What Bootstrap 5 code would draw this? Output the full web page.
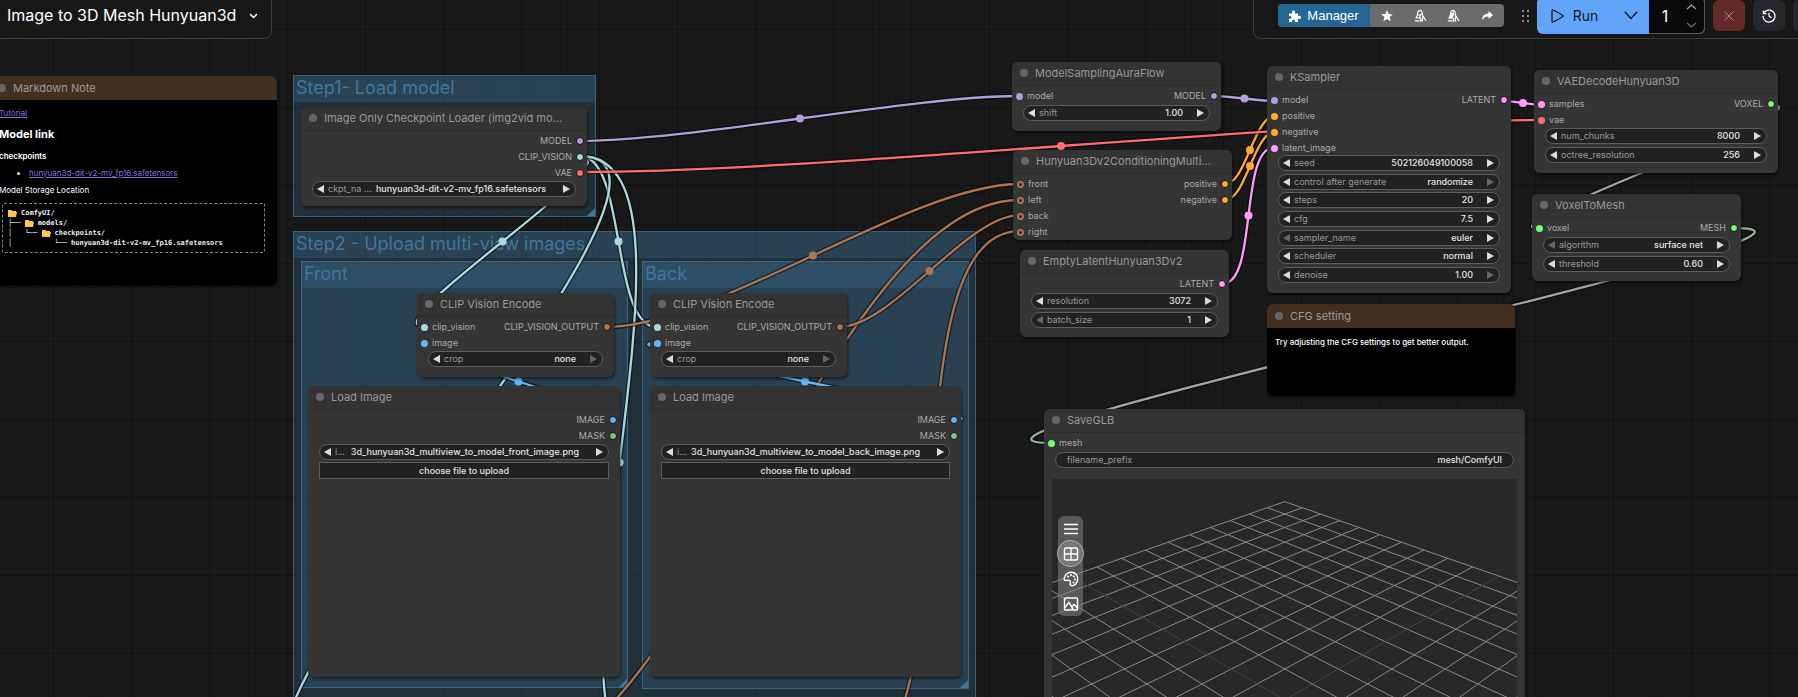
<!DOCTYPE html>
<html lang="en">
<head>
<meta charset="utf-8">
<meta name="viewport" content="width=device-width, initial-scale=1">
<title>Image to 3D Mesh Hunyuan3d</title>
<link href="https://cdn.jsdelivr.net/npm/bootstrap@5.3.0/dist/css/bootstrap.min.css" rel="stylesheet">
<style>
  body { background: #191919; color: #aaa; font-family: Inter, "Liberation Sans", sans-serif; font-size: 9px; line-height: 16px; }
  button, input, select { font: inherit; color: inherit; border: 0; padding: 0; background: transparent; }
  .graph-canvas { isolation: isolate; }
  .layer { position: absolute; inset: 0; width: 100%; height: 100%; pointer-events: none; }

  /* top panels */
  .top-panels { margin-top: -4px; z-index: 5; }
  .top-panel { height: 43px; background: #171717; border: 1px solid #3a3a3a; padding-bottom: 4px; }
  .title-panel { border-left: 0; border-radius: 0 0 8px 0; padding: 0 13px 4px 7px; gap: 13px; color: #fff; }
  .title-panel h1 { font-size: 16px; line-height: 20px; font-weight: 400; margin: 0 0 1px; }
  .action-panel { border-right: 0; border-radius: 0 0 0 8px; padding-left: 24px; }
  .manager-group { width: 226px; height: 23px; border-radius: 4px; overflow: hidden; background: #6b6b6b; color: #fff; }
  .manager-group button { flex: 1 1 0; display: flex; align-items: center; justify-content: center; }
  .manager-group .manager-btn { flex: 0 0 92px; gap: 6px; background: #236692; font: 400 13px/16px "Liberation Sans", sans-serif; }
  .drag-dots { margin: 0 8px 0 18px; color: #8a8a8a; }
  .run-group { height: 37px; border-radius: 6px; overflow: hidden; background: #60a5fa; color: #18181b; }
  .run-btn { width: 75px; gap: 9px; font-size: 14px; display: flex; align-items: center; justify-content: center; }
  .run-menu { width: 37px; display: flex; align-items: center; justify-content: center; }
  .batch-box { width: 56px; background: #09090b; border: 1px solid #52525b; border-left: 0; border-radius: 0 6px 6px 0; color: #fff; }
  .batch-box input { width: 32px; text-align: center; font-size: 16px; }
  .batch-box .arrows { width: 22px; color: #a1a1aa; }
  .square-btn { flex: none; width: 32px; height: 31px; border-radius: 6px; background: #27282b; color: #fff; margin-left: 8px; display: flex; align-items: center; justify-content: center; }
  .square-btn.stop-btn { background: #642a2a; color: #a98c8c; }
  .square-btn.cut-btn { width: 5px; border-radius: 6px 0 0 6px; }

  /* groups */
  .ngroup { position: absolute; background: rgba(63,120,158,.25); border: 1px solid rgba(63,120,158,.7); }
  .ngroup h2 { height: 26px; margin: 0; padding-left: 2px; background: rgba(63,120,158,.26); color: #3f789e; font-size: 18px; line-height: 23px; font-weight: 400; white-space: nowrap; }
  .ngroup::after { content: ""; position: absolute; right: 0; bottom: 0; border: 4px solid; border-color: transparent #3f789e #3f789e transparent; }
  #g1 { left: 293px; top: 75px; width: 303px; height: 142px; }
  #g2 { left: 293px; top: 231px; width: 683px; height: 910px; }
  #g3 { left: 301px; top: 261px; width: 327px; height: 427px; }
  #g4 { left: 642px; top: 261px; width: 327px; height: 428px; }

  /* nodes */
  .gnode { position: absolute; background: #353535; border-radius: 6px; box-shadow: 1px 2px 3px rgba(0,0,0,.5); }
  .gnode > header { height: 24px; padding: 0 0 1px 8px; gap: 7px; display: flex; align-items: center; background: #333; border-bottom: 1px solid #2c2c2c; border-radius: 6px 6px 0 0; }
  .gnode > header::before { content: ""; width: 8px; height: 8px; border-radius: 50%; background: #666; }
  .gnode h3 { margin: 0; font-size: 11px; line-height: 16px; font-weight: 400; color: #999; white-space: nowrap; }
  .slots { display: grid; grid-auto-rows: 1fr; padding: 0 3px 0 4px; margin-top: 2px; }
  .slots-1 { height: 16px; } .slots-2 { height: 31px; } .slots-3 { height: 47px; } .slots-4 { height: 62px; }
  .slot { display: flex; justify-content: space-between; align-items: center; line-height: 16px; }
  .slot span { display: flex; align-items: center; gap: 4px; }
  .slot i { width: 8px; height: 8px; border-radius: 50%; border: 1px solid #111; background: var(--c); }
  .slot i.in { border-width: 0; width: 7px; height: 7px; }
  .slot i.ring { background: #222; border: 2px solid var(--c); }
  .c-model { --c: #b39ddb; } .c-cv { --c: #a8dadc; } .c-vae { --c: #ff6e6e; } .c-cvo { --c: #ad7452; }
  .c-img { --c: #64b5f6; } .c-mask { --c: #81c784; } .c-cond { --c: #ffa931; } .c-lat { --c: #ff9cf9; } .c-any { --c: #77ff77; }
  .widgets { display: flex; flex-direction: column; justify-content: space-between; margin: 1px 11px 0; }
  .widgets-2 { height: 35px; } .widgets-7 { height: 128px; }
  .gwidget { height: 16px; display: flex; align-items: center; background: #222; border: 1px solid #5c5c5c; border-radius: 8px; padding: 0 5px 0 4px; color: #e2e2e2; }
  .gwidget label { color: #999; white-space: nowrap; margin-left: 4px; line-height: 14px; }
  .gwidget input, .gwidget select { flex: 1 1 0; min-width: 0; height: 14px; line-height: 14px; font-weight: 500; text-align: right; text-align-last: right; appearance: none; margin-right: 14px; outline: 0; }
  .gwidget .prev, .gwidget .next { flex: none; width: 0; height: 0; border: 4px solid transparent; }
  .gwidget .prev { border-right: 7px solid #ddd; border-left: 0; }
  .gwidget .next { border-left: 7px solid #ddd; border-right: 0; }
  .gwidget .prev:disabled { border-right-color: #666; }
  .gwidget .next:disabled { border-left-color: #666; }
  .gwidget.file-row select { margin-right: 17px; }
  .upload-btn { height: 17px; width: 100%; background: #222; border: 1px solid #5c5c5c; color: #e2e2e2; font-weight: 500; line-height: 15px; }
  .widgets-file { height: 35px; }

  .note-node { background: #000; }
  .note-node > header { background: #432f20; border-bottom: 0; }
  .note-body { color: #fff; font-size: 8px; line-height: 12px; font-weight: 500; }
  #note { left: -10px; top: 76px; width: 287px; height: 209px; }
  #note .note-body { padding: 7px 12px 0 9px; font-weight: 400; }
  #note a { color: #7b78d8; }
  #note p, #note h4, #note h5, #note ul { margin: 0; }
  #note h4 { font-size: 11px; line-height: 16px; font-weight: 700; margin-top: 7px; }
  #note h5 { font-size: 8px; line-height: 12px; font-weight: 600; margin-top: 8px; }
  #note ul { padding-left: 30px; margin-top: 5px; }
  #note .store { margin-top: 5px; }
  .tree { margin-top: 7px; margin-left: 3px; padding: 4px 5px; border: 1px dashed #888; border-radius: 2px; font: 700 7px/10px "DejaVu Sans Mono", monospace; color: #eee; }
  .tree div { height: 10px; display: flex; align-items: center; gap: 4px; white-space: pre; }
  .tree svg { width: 9px; height: 8px; }
  #cfg { left: 1267px; top: 304px; width: 248px; height: 92px; }
  #cfg .note-body { padding: 8px; }
  #loader { left: 301px; top: 107px; width: 286px; height: 99px; }
  #enc1 { left: 417px; top: 293px; width: 197px; height: 84px; }
  #enc2 { left: 650px; top: 293px; width: 197px; height: 84px; }
  #img1 { left: 308px; top: 386px; width: 312px; height: 291px; }
  #img2 { left: 650px; top: 386px; width: 311px; height: 291px; }
  #aura { left: 1012px; top: 62px; width: 209px; height: 69px; }
  #cond { left: 1013px; top: 150px; width: 219px; height: 90px; }
  #latent { left: 1020px; top: 250px; width: 209px; height: 87px; }
  #ksampler { left: 1267px; top: 66px; width: 244px; height: 227px; }
  #decode { left: 1534px; top: 70px; width: 244px; height: 103px; }
  #voxel { left: 1532px; top: 194px; width: 209px; height: 87px; }
  #glb { left: 1044px; top: 409px; width: 481px; height: 420px; }
  #glb .gwidget { padding: 0 11px 0 7px; }
  #glb .gwidget input { margin-right: 0; }
  .viewport3d { position: relative; margin: 11px 8px 0; height: 340px; background: #282828; overflow: hidden; }
  .view-tools { position: absolute; left: 6px; top: 37px; width: 25px; border-radius: 6px; background: rgba(130,130,130,.55); color: #fff; }
  .view-tools button { width: 25px; height: 25px; display: flex; align-items: center; justify-content: center; }
  .view-tools .active { outline: 1px solid #bbb; border-radius: 50%; background: rgba(150,150,150,.5); }
</style>
</head>
<body class="vh-100 overflow-hidden">
<main class="graph-canvas position-relative w-100 h-100 overflow-hidden">
  <svg class="layer" aria-hidden="true">
    <defs>
      <pattern id="gridTile" x="53" y="29" width="78" height="78" patternUnits="userSpaceOnUse">
        <path d="M8.3 0V78M16.1 0V78M23.9 0V78M31.7 0V78M39.5 0V78M47.3 0V78M55.1 0V78M62.9 0V78M70.7 0V78M0 8.3H78M0 16.1H78M0 23.9H78M0 31.7H78M0 39.5H78M0 47.3H78M0 55.1H78M0 62.9H78M0 70.7H78" stroke="#141414"/>
        <path d="M.5 0V78M0 .5H78" stroke="#111"/>
      </pattern>
    </defs>
    <rect width="100%" height="100%" fill="url(#gridTile)"/>
  </svg>

  <section class="ngroup" id="g1"><h2>Step1- Load model</h2></section>
  <section class="ngroup" id="g2"><h2>Step2 - Upload multi-view images</h2></section>
  <section class="ngroup" id="g3"><h2>Front</h2></section>
  <section class="ngroup" id="g4"><h2>Back</h2></section>

  <svg class="layer" id="links" aria-hidden="true" fill="none"></svg>

  <article class="gnode note-node" id="note">
    <header><h3>Markdown Note</h3></header>
    <div class="note-body">
      <p><a href="#tutorial">Tutorial</a></p>
      <h4>Model link</h4>
      <h5>checkpoints</h5>
      <ul><li><a href="#model">hunyuan3d-dit-v2-mv_fp16.safetensors</a></li></ul>
      <p class="store">Model Storage Location</p>
      <div class="tree">
        <div><svg viewBox="0 0 9 8"><path d="M0 1h3.500l1 1H8v1h1l-1 5H0z" fill="#ffc34d"/></svg><span>ComfyUI/</span></div>
        <div><span>├──</span><svg viewBox="0 0 9 8"><path d="M0 1h3.500l1 1H8v1h1l-1 5H0z" fill="#ffc34d"/></svg><span>models/</span></div>
        <div><span>│   └──</span><svg viewBox="0 0 9 8"><path d="M0 1h3.500l1 1H8v1h1l-1 5H0z" fill="#ffc34d"/></svg><span>checkpoints/</span></div>
        <div><span>│          └──</span><span>hunyuan3d-dit-v2-mv_fp16.safetensors</span></div>
      </div>
    </div>
  </article>

  <article class="gnode" id="loader">
    <header><h3>Image Only Checkpoint Loader (img2vid mo...</h3></header>
    <div class="slots slots-3">
      <div class="slot"><span></span><span>MODEL<i class="c-model"></i></span></div>
      <div class="slot"><span></span><span>CLIP_VISION<i class="c-cv"></i></span></div>
      <div class="slot"><span></span><span>VAE<i class="c-vae"></i></span></div>
    </div>
    <div class="widgets">
      <div class="gwidget file-row"><button class="prev" aria-label="Previous"></button><label for="w-ckpt">ckpt_na ...</label><select id="w-ckpt"><option>hunyuan3d-dit-v2-mv_fp16.safetensors</option></select><button class="next" aria-label="Next"></button></div>
    </div>
  </article>

  <article class="gnode" id="enc1">
    <header><h3>CLIP Vision Encode</h3></header>
    <div class="slots slots-2">
      <div class="slot"><span><i class="in c-cv"></i>clip_vision</span><span>CLIP_VISION_OUTPUT<i class="c-cvo"></i></span></div>
      <div class="slot"><span><i class="in c-img"></i>image</span></div>
    </div>
    <div class="widgets">
      <div class="gwidget"><button class="prev" aria-label="Previous"></button><label for="w-crop1">crop</label><select id="w-crop1"><option>none</option></select><button class="next" aria-label="Next" disabled></button></div>
    </div>
  </article>

  <article class="gnode" id="enc2">
    <header><h3>CLIP Vision Encode</h3></header>
    <div class="slots slots-2">
      <div class="slot"><span><i class="in c-cv"></i>clip_vision</span><span>CLIP_VISION_OUTPUT<i class="c-cvo"></i></span></div>
      <div class="slot"><span><i class="in c-img"></i>image</span></div>
    </div>
    <div class="widgets">
      <div class="gwidget"><button class="prev" aria-label="Previous"></button><label for="w-crop2">crop</label><select id="w-crop2"><option>none</option></select><button class="next" aria-label="Next" disabled></button></div>
    </div>
  </article>

  <article class="gnode" id="img1">
    <header><h3>Load Image</h3></header>
    <div class="slots slots-2">
      <div class="slot"><span></span><span>IMAGE<i class="c-img"></i></span></div>
      <div class="slot"><span></span><span>MASK<i class="c-mask"></i></span></div>
    </div>
    <div class="widgets widgets-file">
      <div class="gwidget file-row"><button class="prev" aria-label="Previous"></button><label for="w-img1">i...</label><select id="w-img1"><option>3d_hunyuan3d_multiview_to_model_front_image.png</option></select><button class="next" aria-label="Next"></button></div>
      <button class="upload-btn">choose file to upload</button>
    </div>
  </article>

  <article class="gnode" id="img2">
    <header><h3>Load Image</h3></header>
    <div class="slots slots-2">
      <div class="slot"><span></span><span>IMAGE<i class="c-img"></i></span></div>
      <div class="slot"><span></span><span>MASK<i class="c-mask"></i></span></div>
    </div>
    <div class="widgets widgets-file">
      <div class="gwidget file-row"><button class="prev" aria-label="Previous"></button><label for="w-img2">i...</label><select id="w-img2"><option>3d_hunyuan3d_multiview_to_model_back_image.png</option></select><button class="next" aria-label="Next"></button></div>
      <button class="upload-btn">choose file to upload</button>
    </div>
  </article>

  <article class="gnode" id="aura">
    <header><h3>ModelSamplingAuraFlow</h3></header>
    <div class="slots slots-1">
      <div class="slot"><span><i class="in c-model"></i>model</span><span>MODEL<i class="c-model"></i></span></div>
    </div>
    <div class="widgets">
      <div class="gwidget"><button class="prev" aria-label="Decrease"></button><label for="w-shift">shift</label><input id="w-shift" value="1.00"><button class="next" aria-label="Increase"></button></div>
    </div>
  </article>

  <article class="gnode" id="cond">
    <header><h3>Hunyuan3Dv2ConditioningMulti...</h3></header>
    <div class="slots slots-4">
      <div class="slot"><span><i class="in ring c-cvo"></i>front</span><span>positive<i class="c-cond"></i></span></div>
      <div class="slot"><span><i class="in ring c-cvo"></i>left</span><span>negative<i class="c-cond"></i></span></div>
      <div class="slot"><span><i class="in ring c-cvo"></i>back</span></div>
      <div class="slot"><span><i class="in ring c-cvo"></i>right</span></div>
    </div>
  </article>

  <article class="gnode" id="latent">
    <header><h3>EmptyLatentHunyuan3Dv2</h3></header>
    <div class="slots slots-1">
      <div class="slot"><span></span><span>LATENT<i class="c-lat"></i></span></div>
    </div>
    <div class="widgets widgets-2">
      <div class="gwidget"><button class="prev" aria-label="Decrease"></button><label for="w-res">resolution</label><input id="w-res" value="3072"><button class="next" aria-label="Increase"></button></div>
      <div class="gwidget"><button class="prev" aria-label="Decrease" disabled></button><label for="w-batch">batch_size</label><input id="w-batch" value="1"><button class="next" aria-label="Increase"></button></div>
    </div>
  </article>

  <article class="gnode" id="ksampler">
    <header><h3>KSampler</h3></header>
    <div class="slots slots-4">
      <div class="slot"><span><i class="in c-model"></i>model</span><span>LATENT<i class="c-lat"></i></span></div>
      <div class="slot"><span><i class="in c-cond"></i>positive</span></div>
      <div class="slot"><span><i class="in c-cond"></i>negative</span></div>
      <div class="slot"><span><i class="in c-lat"></i>latent_image</span></div>
    </div>
    <div class="widgets widgets-7">
      <div class="gwidget"><button class="prev" aria-label="Decrease"></button><label for="w-seed">seed</label><input id="w-seed" value="502126049100058"><button class="next" aria-label="Increase"></button></div>
      <div class="gwidget"><button class="prev" aria-label="Previous"></button><label for="w-ctl">control after generate</label><select id="w-ctl"><option>randomize</option></select><button class="next" aria-label="Next" disabled></button></div>
      <div class="gwidget"><button class="prev" aria-label="Decrease"></button><label for="w-steps">steps</label><input id="w-steps" value="20"><button class="next" aria-label="Increase"></button></div>
      <div class="gwidget"><button class="prev" aria-label="Decrease"></button><label for="w-cfg">cfg</label><input id="w-cfg" value="7.5"><button class="next" aria-label="Increase"></button></div>
      <div class="gwidget"><button class="prev" aria-label="Previous" disabled></button><label for="w-samp">sampler_name</label><select id="w-samp"><option>euler</option></select><button class="next" aria-label="Next"></button></div>
      <div class="gwidget"><button class="prev" aria-label="Previous"></button><label for="w-sched">scheduler</label><select id="w-sched"><option>normal</option></select><button class="next" aria-label="Next"></button></div>
      <div class="gwidget"><button class="prev" aria-label="Decrease"></button><label for="w-den">denoise</label><input id="w-den" value="1.00"><button class="next" aria-label="Increase" disabled></button></div>
    </div>
  </article>

  <article class="gnode note-node" id="cfg">
    <header><h3>CFG setting</h3></header>
    <div class="note-body">Try adjusting the CFG settings to get better output.</div>
  </article>

  <article class="gnode" id="decode">
    <header><h3>VAEDecodeHunyuan3D</h3></header>
    <div class="slots slots-2">
      <div class="slot"><span><i class="in c-lat"></i>samples</span><span>VOXEL<i class="c-any"></i></span></div>
      <div class="slot"><span><i class="in c-vae"></i>vae</span></div>
    </div>
    <div class="widgets widgets-2">
      <div class="gwidget"><button class="prev" aria-label="Decrease"></button><label for="w-chunks">num_chunks</label><input id="w-chunks" value="8000"><button class="next" aria-label="Increase"></button></div>
      <div class="gwidget"><button class="prev" aria-label="Decrease"></button><label for="w-oct">octree_resolution</label><input id="w-oct" value="256"><button class="next" aria-label="Increase"></button></div>
    </div>
  </article>

  <article class="gnode" id="voxel">
    <header><h3>VoxelToMesh</h3></header>
    <div class="slots slots-1">
      <div class="slot"><span><i class="in c-any"></i>voxel</span><span>MESH<i class="c-any"></i></span></div>
    </div>
    <div class="widgets widgets-2">
      <div class="gwidget"><button class="prev" aria-label="Previous" disabled></button><label for="w-alg">algorithm</label><select id="w-alg"><option>surface net</option></select><button class="next" aria-label="Next"></button></div>
      <div class="gwidget"><button class="prev" aria-label="Decrease"></button><label for="w-thr">threshold</label><input id="w-thr" value="0.60"><button class="next" aria-label="Increase"></button></div>
    </div>
  </article>

  <article class="gnode" id="glb">
    <header><h3>SaveGLB</h3></header>
    <div class="slots slots-1">
      <div class="slot"><span><i class="in c-any"></i>mesh</span></div>
    </div>
    <div class="widgets">
      <div class="gwidget"><label for="w-prefix">filename_prefix</label><input id="w-prefix" value="mesh/ComfyUI"></div>
    </div>
    <div class="viewport3d">
      <svg class="layer" id="floor" aria-hidden="true"></svg>
      <div class="view-tools">
        <button aria-label="Menu"><svg width="16" height="16" viewBox="0 0 16 16" stroke="currentColor" stroke-width="1.5"><path d="M1 3.500h14M1 8h14M1 12.500h14"/></svg></button>
        <button class="active" aria-label="Toggle grid"><svg width="16" height="16" viewBox="0 0 16 16" fill="none" stroke="currentColor" stroke-width="1.400"><rect x="1.500" y="2" width="13" height="12" rx="1.500"/><path d="M8 2v12M1.500 8h13"/></svg></button>
        <button aria-label="Background colour"><svg width="16" height="16" viewBox="0 0 16 16" fill="none" stroke="currentColor" stroke-width="1.400"><path d="M1.200 7.500C1.500 3.800 4.800 1.200 8.300 1.300c3.800.1 6.500 3 6.400 6.600C14.600 11.800 12 14.800 9 14.700c-1.800-.1-2.300-1.300-1.800-2.700.5-1.700-.1-3-1.900-2.900-1.500.1-3.500 1-4-.2z"/><g fill="currentColor" stroke="none"><circle cx="5" cy="5.500" r="1"/><circle cx="8" cy="4" r="1"/><circle cx="11" cy="5.500" r="1"/><circle cx="12" cy="8.500" r="1"/><circle cx="10.500" cy="11.500" r="1"/></g></svg></button>
        <button aria-label="Background image"><svg width="16" height="16" viewBox="0 0 16 16" fill="none" stroke="currentColor" stroke-width="1.400" stroke-linejoin="round"><rect x="1.500" y="2" width="13" height="12" rx="1"/><path d="M2 11.500 5.800 6.500l4.500 7M8.500 10.800l2.800-2.300 3.200 3.500"/></svg></button>
      </div>
    </div>
  </article>

  <div class="top-panels position-relative d-flex justify-content-between align-items-start">
    <nav class="top-panel title-panel d-flex align-items-center">
      <h1>Image to 3D Mesh Hunyuan3d</h1>
      <button aria-label="Workflow menu" class="d-flex"><svg width="9" height="6" viewBox="0 0 9 6" fill="none" stroke="currentColor" stroke-width="1.500"><path d="M1 1l3.500 3.500L8 1"/></svg></button>
    </nav>
    <div class="top-panel action-panel d-flex align-items-center">
      <div class="manager-group d-flex">
        <button class="manager-btn"><svg width="12" height="12" viewBox="0 0 12 12" fill="currentColor"><path d="M0 3.500h3.200C2.500 1.700 3.200.5 4.500.5s2 1.200 1.300 3H9V6c1.800-.7 3 0 3 1.400S10.800 9.500 9 8.800V12H5.800c.6-1.500 0-2.300-1.200-2.300S2.700 10.500 3.300 12H0V8.600c1.500.6 2.400 0 2.400-1.200S1.500 5.600 0 6.200z"/></svg>Manager</button>
        <button aria-label="Favourites"><svg width="12" height="12" viewBox="0 0 12 12" fill="currentColor"><path d="M6 0l1.600 4 4.200.3-3.200 2.800 1 4.200L6 9l-3.600 2.300 1-4.200L.2 4.300 4.400 4z"/></svg></button>
        <button aria-label="Unload models"><svg width="13" height="13" viewBox="0 0 13 13" fill="none" stroke="currentColor" stroke-width="1.200"><path d="M3.500 6C3 2.500 5.500 1 7 1.600c1.600.6 1.200 3 1.700 4.900L12 12M.8 11.800h4.700M1.500 9h3.800L7.500 4.500M2 9l1.500-3h3M6.500 9v2.800h2V7.500"/></svg></button>
        <button aria-label="Free model and node cache"><svg width="13" height="13" viewBox="0 0 13 13" fill="none" stroke="currentColor" stroke-width="1.200"><path d="M3.500 6C3 2.500 5.500 1 7 1.600c1.600.6 1.200 3 1.700 4.900L12 12M.8 11.800h4.700M6.500 9v2.800h2V7.500"/><path d="M1.200 9.800 3 5.200l4-2.700.2 3.300-1.700 4z" fill="currentColor" stroke="none"/></svg></button>
        <button aria-label="Share"><svg width="11" height="10" viewBox="0 0 11 10" fill="currentColor"><path d="M6.500 0 11 4 6.500 8V5.600C3.500 5.500 1.500 6.500.6 9.500-.4 5.500 2 2.500 6.500 2.400z"/></svg></button>
      </div>
      <svg class="drag-dots" width="7" height="12" viewBox="0 0 7 12" fill="currentColor"><path d="M0 0h2v2H0zM5 0h2v2H5zM0 5h2v2H0zM5 5h2v2H5zM0 10h2v2H0zM5 10h2v2H5z"/></svg>
      <div class="run-group d-flex">
        <button class="run-btn"><svg width="13" height="14" viewBox="0 0 13 14" fill="none" stroke="currentColor" stroke-width="1.300" stroke-linejoin="round"><path d="M1 2C1 1 1.800.7 2.600 1.200l9 5c.7.4.7 1.200 0 1.600l-9 5C1.800 13.300 1 13 1 12z"/></svg>Run</button>
        <button class="run-menu" aria-label="Run options"><svg width="14" height="9" viewBox="0 0 14 9" fill="none" stroke="currentColor" stroke-width="1.500"><path d="M.8.8 7 7.500 13.200.8"/></svg></button>
        <div class="batch-box d-flex align-items-center">
          <input aria-label="Batch count" value="1">
          <svg class="arrows" width="22" height="26" viewBox="0 0 22 26" fill="none" stroke="currentColor" stroke-width="1.200"><path d="M6 6l4.500-4L15 6"/><path d="M6 20l4.500 4 4.500-4" opacity=".7"/></svg>
        </div>
      </div>
      <button class="square-btn stop-btn" aria-label="Cancel"><svg width="10" height="10" viewBox="0 0 10 10" stroke="currentColor"><path d="M.5.5l9 9M9.500.5l-9 9"/></svg></button>
      <button class="square-btn" aria-label="History"><svg width="14" height="14" viewBox="0 0 14 14" fill="none" stroke="currentColor" stroke-width="1.300"><path d="M1.300 1.500v3.200h3.200M1.600 4.500A6 6 0 1 1 1 7M7 3.800V7.200l2.600 1.400"/></svg></button>
      <button class="square-btn cut-btn" aria-label="More"></button>
    </div>
  </div>
</main>
<script src="https://cdn.jsdelivr.net/npm/bootstrap@5.3.0/dist/js/bootstrap.bundle.min.js"></script>
<script>
  const NS = 'http://www.w3.org/2000/svg';
  function add(parent, name, attrs) {
    const el = document.createElementNS(NS, name);
    for (const k in attrs) el.setAttribute(k, attrs[k]);
    parent.appendChild(el);
  }

  // Each link: output slot x, y, input slot x, y, colour
  const links = [
    [580, 141, 1020, 96, '#b39ddb'],
    [580, 156, 425, 327, '#a8dadc'],
    [580, 156, 657, 327, '#a8dadc'],
    [580, 156, 313, 769, '#a8dadc'],
    [580, 156, 659, 769, '#a8dadc'],
    [606, 327, 1020, 184, '#ad7452'],
    [496, 769, 1020, 200, '#ad7452'],
    [839, 327, 1020, 215, '#ad7452'],
    [841, 769, 1020, 231, '#ad7452'],
    [612, 420, 425, 343, '#64b5f6'],
    [953, 420, 657, 343, '#64b5f6'],
    [1214, 96, 1275, 101, '#b39ddb'],
    [1225, 184, 1275, 116, '#ffa931'],
    [1225, 200, 1275, 132, '#ffa931'],
    [580, 172, 1542, 120, '#ff6e6e'],
    [1222, 284, 1275, 147, '#ff9cf9'],
    [1504, 101, 1542, 105, '#ff9cf9'],
    [1771, 105, 1540, 229, '#99aa99'],
    [1734, 228, 1052, 443, '#99aa99']
  ];
  const linkLayer = document.getElementById('links');
  for (const [x1, y1, x2, y2, color] of links) {
    const bend = Math.hypot(x2 - x1, y2 - y1) / 4;
    const d = `M${x1} ${y1}C${x1 + bend} ${y1} ${x2 - bend} ${y2} ${x2} ${y2}`;
    add(linkLayer, 'path', { d, stroke: 'rgba(0,0,0,.5)', 'stroke-width': 5 });
    add(linkLayer, 'path', { d, stroke: color, 'stroke-width': 2.3 });
    add(linkLayer, 'circle', { cx: (x1 + x2) / 2, cy: (y1 + y2) / 2, r: 4, fill: color });
  }

  // 20 x 20 floor grid seen in perspective from one corner
  const floor = document.getElementById('floor');
  function project(i, j) {
    const w = 1.12032e-3 - 2.2405e-5 * (i + j);
    return [232.8 + 0.019167 * (i - j) / w, -274.9 + 1 / (3 * w)];
  }
  for (let n = 0; n <= 20; n++) {
    for (const [a, b] of [[[n, 0], [n, 20]], [[0, n], [20, n]]]) {
      const [x1, y1] = project(...a), [x2, y2] = project(...b);
      add(floor, 'line', { x1, y1, x2, y2, stroke: n === 10 ? '#444' : '#8a8a8a' });
    }
  }
</script>
</body>
</html>
